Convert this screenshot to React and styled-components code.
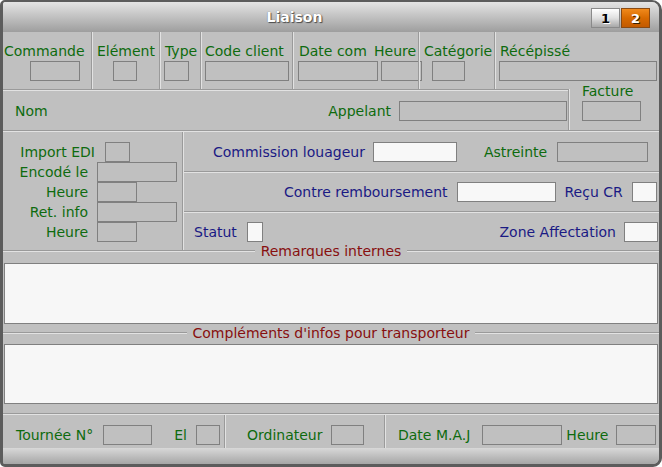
import React from "react";
import styled, { createGlobalStyle } from "styled-components";

const GREEN = "#0e6b0e";
const NAVY = "#1a1a84";
const RED = "#870f0f";

const GlobalStyle = createGlobalStyle`
  html, body {
    margin: 0;
    padding: 0;
    background: #ffffff;
  }
  body {
    font-family: "DejaVu Sans", Verdana, sans-serif;
    font-size: 14px;
  }
`;

function Liaison() {
  return (
    <Window>
      <TitleBar>
        <Title>Liaison</Title>
        <PageButton>1</PageButton>
        <PageButton $active>2</PageButton>
      </TitleBar>

      <Body>
        {/* en-tête de la commande */}
        <HeaderRow>
          <Cell $w={88}>
            <TopLabel $ml={1}>Commande</TopLabel>
            <Field $ml={27} $w={50} />
          </Cell>
          <VRule />
          <Cell $w={66}>
            <TopLabel $ml={4}>Elément</TopLabel>
            <Field $ml={20} $w={24} />
          </Cell>
          <VRule />
          <Cell $w={39}>
            <TopLabel $ml={4}>Type</TopLabel>
            <Field $ml={3} $w={25} />
          </Cell>
          <VRule />
          <Cell $w={90}>
            <TopLabel $ml={3}>Code client</TopLabel>
            <Field $ml={3} $w={84} />
          </Cell>
          <VRule />
          <Cell $w={124} $row>
            <Stack $ml={4}>
              <TopLabel $ml={1}>Date com</TopLabel>
              <Field $w={80} />
            </Stack>
            <Stack $ml={-4}>
              <TopLabel>Heure</TopLabel>
              <Field $ml={7} $w={41} />
            </Stack>
          </Cell>
          <VRule />
          <Cell $w={74}>
            <TopLabel $ml={4}>Catégorie</TopLabel>
            <Field $ml={12} $w={33} />
          </Cell>
          <VRule />
          <Cell>
            <TopLabel $ml={4}>Récépissé</TopLabel>
            <Field $ml={3} $w={158} />
          </Cell>
        </HeaderRow>

        <CallerRow>
          <CallerBox>
            <HRule />
            <CallerLine>
              <InlineLabel>Nom</InlineLabel>
              <Group>
                <InlineLabel>Appelant</InlineLabel>
                <Field $ml={8} $w={168} />
              </Group>
            </CallerLine>
          </CallerBox>
          <VRule />
          <InvoiceBox>
            <InvoiceLabel>Facture</InvoiceLabel>
            <Field $w={59} />
          </InvoiceBox>
        </CallerRow>
        <HRule />

        <DetailRow>
          <SidePanel>
            <FormRow>
              <SideLabel $w={92}>Import EDI</SideLabel>
              <Field $ml={10} $w={25} />
            </FormRow>
            <FormRow>
              <SideLabel $w={85}>Encodé le</SideLabel>
              <Field $ml={9} $w={80} />
            </FormRow>
            <FormRow>
              <SideLabel $w={85}>Heure</SideLabel>
              <Field $ml={9} $w={40} />
            </FormRow>
            <FormRow>
              <SideLabel $w={85}>Ret. info</SideLabel>
              <Field $ml={9} $w={80} />
            </FormRow>
            <FormRow>
              <SideLabel $w={85}>Heure</SideLabel>
              <Field $ml={9} $w={40} />
            </FormRow>
          </SidePanel>
          <VRule />
          <MainPanel>
            <SubRow $h={39} $pl={29}>
              <InlineLabel $c={NAVY}>Commission louageur</InlineLabel>
              <Field $ml={8} $w={84} $white />
              <InlineLabel $ml={27}>Astreinte</InlineLabel>
              <Field $ml={10} $w={91} />
            </SubRow>
            <HRule />
            <SubRow $h={38} $pl={100}>
              <InlineLabel $c={NAVY}>Contre remboursement</InlineLabel>
              <Field $ml={9} $w={99} $white />
              <InlineLabel $c={NAVY} $ml={9}>Reçu CR</InlineLabel>
              <Field $ml={9} $w={25} $white />
            </SubRow>
            <HRule />
            <SubRow $pl={10}>
              <InlineLabel $c={NAVY}>Statut</InlineLabel>
              <Field $ml={10} $w={16} $white />
              <Group>
                <InlineLabel $c={NAVY}>Zone Affectation</InlineLabel>
                <Field $ml={8} $w={34} $white />
              </Group>
            </SubRow>
          </MainPanel>
        </DetailRow>

        <Legend $mt={-5}>
          <LegendLine />
          <LegendText>Remarques internes</LegendText>
          <LegendLine />
        </Legend>
        <Memo $mt={6} $h={61} />

        <Legend $mt={3}>
          <LegendLine />
          <LegendText>Compléments d'infos pour transporteur</LegendText>
          <LegendLine />
        </Legend>
        <Memo $mt={5} $h={60} />

        <FooterRow>
          <HRule />
          <FooterLine>
            <FooterCell $w={221} $pl={13}>
              <InlineLabel>Tournée N°</InlineLabel>
              <Field $ml={10} $w={49} />
              <InlineLabel $ml={22}>El</InlineLabel>
              <Field $ml={9} $w={24} />
            </FooterCell>
            <VRule />
            <FooterCell $w={158} $pl={21}>
              <InlineLabel>Ordinateur</InlineLabel>
              <Field $ml={8} $w={33} />
            </FooterCell>
            <VRule />
            <FooterCell $pl={12}>
              <InlineLabel>Date M.A.J</InlineLabel>
              <Field $ml={12} $w={80} />
              <InlineLabel $ml={4}>Heure</InlineLabel>
              <Field $ml={8} $w={40} />
            </FooterCell>
          </FooterLine>
        </FooterRow>
      </Body>

      <StatusBar />
    </Window>
  );
}

export default function App() {
  return (
    <>
      <GlobalStyle />
      <Liaison />
    </>
  );
}

const Window = styled.div`
  width: 662px;
  height: 467px;
  box-sizing: border-box;
  border: 3px solid #5c5c5c;
  border-top-width: 2px;
  border-radius: 5px 10px 9px 5px;
  overflow: hidden;
  display: flex;
  flex-direction: column;
  background: #c0c0c0;
`;

const TitleBar = styled.div`
  height: 30px;
  flex: none;
  display: flex;
  align-items: center;
  padding-right: 9px;
  background: linear-gradient(#e4e4e4, #9e9e9e);
`;

const Title = styled.div`
  flex: 1;
  text-align: center;
  padding-right: 4px;
  font-weight: bold;
  font-size: 14px;
  color: #ffffff;
  text-shadow: 1px 1px 1px #4a4a4a, 0 0 1px #6a6a6a;
`;

const PageButton = styled.div`
  width: 29px;
  height: 20px;
  box-sizing: border-box;
  margin-left: 1px;
  margin-top: 2px;
  display: flex;
  align-items: center;
  justify-content: center;
  font-size: 13px;
  font-weight: bold;
  border: 1px solid ${(p) => (p.$active ? "#8a4a12" : "#8a8a8a")};
  background: ${(p) =>
    p.$active
      ? "linear-gradient(#f08a1c, #d86a00 50%, #c25a00)"
      : "linear-gradient(#ffffff, #e0e0e0 50%, #a8a8a8)"};
  color: ${(p) => (p.$active ? "#ffffff" : "#000000")};
  text-shadow: ${(p) =>
    p.$active ? "1px 1px 0 #3a2000" : "1px 1px 0 #ffffff"};
`;

const Body = styled.div`
  flex: 1;
  display: flex;
  flex-direction: column;
  color: ${GREEN};
`;

const VRule = styled.div`
  flex: none;
  width: 2px;
  align-self: stretch;
  box-sizing: border-box;
  border-left: 1px solid #9a9a9a;
  background: #e2e2e2;
`;

const HRule = styled.div`
  flex: none;
  height: 2px;
  box-sizing: border-box;
  border-top: 1px solid #9a9a9a;
  background: #e2e2e2;
`;

const Field = styled.div`
  flex: none;
  box-sizing: border-box;
  width: ${(p) => p.$w}px;
  height: 20px;
  margin-left: ${(p) => p.$ml || 0}px;
  border: 1px solid #808080;
  background: ${(p) => (p.$white ? "#f8f8f8" : "transparent")};
`;

const HeaderRow = styled.div`
  display: flex;
  height: 57px;
  flex: none;
`;

const Cell = styled.div`
  ${(p) => (p.$w ? `width: ${p.$w}px; flex: none;` : "flex: 1;")}
  padding-top: 11px;
  box-sizing: border-box;
  display: flex;
  flex-direction: ${(p) => (p.$row ? "row" : "column")};
  align-items: flex-start;
  gap: ${(p) => (p.$row ? 0 : 1)}px;
`;

const Stack = styled.div`
  display: flex;
  flex-direction: column;
  align-items: flex-start;
  gap: 1px;
  margin-left: ${(p) => p.$ml}px;
`;

const TopLabel = styled.span`
  margin-left: ${(p) => p.$ml || 0}px;
  line-height: 17px;
  white-space: nowrap;
  color: ${GREEN};
`;

const InlineLabel = styled.span`
  flex: none;
  margin-left: ${(p) => p.$ml || 0}px;
  line-height: 20px;
  white-space: nowrap;
  color: ${(p) => p.$c || GREEN};
`;

const Group = styled.div`
  margin-left: auto;
  display: flex;
  align-items: center;
`;

const CallerRow = styled.div`
  display: flex;
  height: 41px;
  flex: none;
`;

const CallerBox = styled.div`
  width: 565px;
  flex: none;
  display: flex;
  flex-direction: column;
`;

const CallerLine = styled.div`
  flex: 1;
  display: flex;
  align-items: center;
  padding: 1px 1px 0 12px;
`;

const InvoiceBox = styled.div`
  flex: 1;
  display: flex;
  flex-direction: column;
  align-items: flex-start;
  gap: 1px;
  padding-left: 12px;
`;

const InvoiceLabel = styled.span`
  margin-top: -6px;
  line-height: 17px;
  color: ${GREEN};
`;

const DetailRow = styled.div`
  display: flex;
  height: 118px;
  flex: none;
`;

const SidePanel = styled.div`
  width: 179px;
  flex: none;
  display: flex;
  flex-direction: column;
  padding-top: 10px;
  box-sizing: border-box;
`;

const FormRow = styled.div`
  display: flex;
  align-items: center;
  height: 20px;
`;

const SideLabel = styled.span`
  width: ${(p) => p.$w}px;
  flex: none;
  text-align: right;
  line-height: 20px;
  white-space: nowrap;
  color: ${GREEN};
`;

const MainPanel = styled.div`
  flex: 1;
  display: flex;
  flex-direction: column;
  overflow: hidden;
`;

const SubRow = styled.div`
  ${(p) => (p.$h ? `height: ${p.$h}px; flex: none;` : "flex: 1;")}
  display: flex;
  align-items: center;
  padding-left: ${(p) => p.$pl}px;
  padding-right: 1px;
`;

const Legend = styled.div`
  flex: none;
  height: 12px;
  margin-top: ${(p) => p.$mt}px;
  display: flex;
  align-items: center;
`;

const LegendLine = styled.div`
  flex: 1;
  height: 2px;
  box-sizing: border-box;
  border-top: 1px solid #9a9a9a;
  background: #e2e2e2;
`;

const LegendText = styled.span`
  padding: 0 6px;
  line-height: 12px;
  white-space: nowrap;
  color: ${RED};
`;

const Memo = styled.div`
  flex: none;
  height: ${(p) => p.$h}px;
  margin: ${(p) => p.$mt}px 1px 0;
  box-sizing: border-box;
  border: 1px solid #808080;
  background: #f7f7f7;
`;

const FooterRow = styled.div`
  flex: none;
  margin-top: 9px;
  display: flex;
  flex-direction: column;
`;

const FooterLine = styled.div`
  display: flex;
  height: 33px;
`;

const FooterCell = styled.div`
  ${(p) => (p.$w ? `width: ${p.$w}px; flex: none;` : "flex: 1;")}
  display: flex;
  align-items: flex-start;
  padding: 10px 0 0 ${(p) => p.$pl}px;
  box-sizing: border-box;
`;

const StatusBar = styled.div`
  height: 16px;
  flex: none;
  background: linear-gradient(#d8d8d8, #a6a6a6);
`;
